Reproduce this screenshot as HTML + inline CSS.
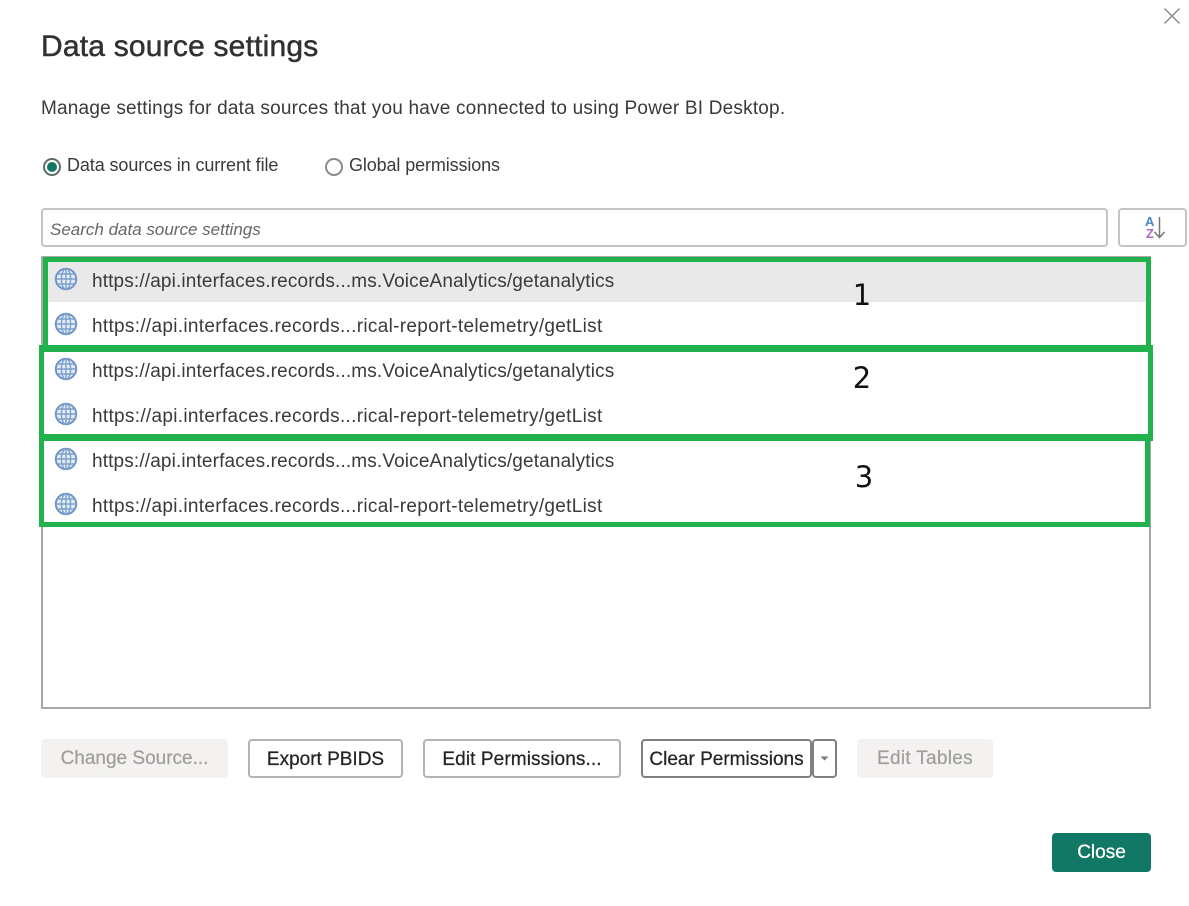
<!DOCTYPE html>
<html>
<head>
<meta charset="utf-8">
<style>
html,body{margin:0;padding:0;background:#fff}
#p{position:relative;width:1189px;height:906px;overflow:hidden;background:#fff;font-family:"Liberation Sans",sans-serif;color:#333}
#p div,#p span.t{position:absolute;box-sizing:border-box;white-space:nowrap}
.u{left:92px;font-size:19px;line-height:24px;color:#3a3a3a}
.a{letter-spacing:.145px}
.c{letter-spacing:.31px}
.b{top:739px;height:39px;font-size:19px;line-height:37px;text-align:center;border-radius:4px;font-weight:400}
.o{border:2px solid #b3b3b3;background:#fff;color:#252423;-webkit-text-stroke:.25px #252423}
.d{background:#f3f2f1;color:#a19f9d;-webkit-text-stroke:.25px #a19f9d;line-height:39px}
.g{background:#22b14c}
.n{font-family:"DejaVu Sans",sans-serif;font-size:29px;line-height:34px;color:#111;width:30px;text-align:center}
svg{position:absolute;display:block}
</style>
</head>
<body>
<div id="p">
  <svg style="left:1163px;top:7px" width="18" height="18" viewBox="0 0 18 18"><path d="M1.5 1.5L16.5 16.5M16.5 1.5L1.5 16.5" stroke="#8a8a8a" stroke-width="1.4" fill="none"/></svg>

  <div style="left:41px;top:29px;font-size:30px;line-height:36px;color:#323130;-webkit-text-stroke:.5px #323130;letter-spacing:.2px">Data source settings</div>
  <div style="left:41px;top:97px;font-size:19px;line-height:24px;color:#3a3a3a;letter-spacing:.2px">Manage settings for data sources that you have connected to using Power BI Desktop.</div>

  <div style="left:43px;top:158px;width:18px;height:18px;border-radius:50%;border:2px solid #5d6d68;background:#fff"></div>
  <div style="left:47px;top:162px;width:10px;height:10px;border-radius:50%;background:#117865"></div>
  <div style="left:67px;top:153px;font-size:18px;line-height:24px;color:#3a3a3a;letter-spacing:-.1px">Data sources in current file</div>
  <div style="left:325px;top:158px;width:18px;height:18px;border-radius:50%;border:2px solid #8a8a8a;background:#fff"></div>
  <div style="left:349px;top:153px;font-size:18px;line-height:24px;color:#3a3a3a;letter-spacing:-.12px">Global permissions</div>

  <div style="left:41px;top:208px;width:1067px;height:39px;border:2px solid #c4c4c4;border-radius:4px"></div>
  <div style="left:50px;top:218px;font-size:17px;line-height:24px;font-style:italic;color:#666">Search data source settings</div>

  <div style="left:1118px;top:208px;width:69px;height:39px;border:2px solid #c4c4c4;border-radius:4px"></div>
  <span class="t" style="left:1145px;top:215px;font-size:13px;line-height:13px;font-weight:700;color:#4a86c8">A</span>
  <span class="t" style="left:1146px;top:227px;font-size:13px;line-height:13px;font-weight:700;color:#a66bc4">Z</span>
  <svg style="left:1153px;top:216px" width="14" height="25" viewBox="0 0 14 25"><path d="M6.5 1V21M1.5 16L6.5 21.5L11.5 16" stroke="#777" stroke-width="1.5" fill="none"/></svg>

  <div style="left:41px;top:256px;width:1110px;height:453px;border:2px solid #a9a9a9;background:#fff"></div>
  <div style="left:48px;top:262px;width:1098px;height:40px;background:#e9e9e9"></div>

  <svg style="left:0;top:0;width:1189px;height:906px" viewBox="0 0 1189 906">
    <g fill="#e4ecf6" stroke="#7da0cc" stroke-width="1.4">
      <g><circle cx="66" cy="279" r="10.2" stroke-width="2" stroke="#6f95c4"/><ellipse cx="66" cy="279" rx="4.6" ry="10.2" fill="none"/><path d="M57 274H75M56 279H76M57 284H75M66 269V289" fill="none"/></g>
      <g><circle cx="66" cy="324" r="10.2" stroke-width="2" stroke="#6f95c4"/><ellipse cx="66" cy="324" rx="4.6" ry="10.2" fill="none"/><path d="M57 319H75M56 324H76M57 329H75M66 314V334" fill="none"/></g>
      <g><circle cx="66" cy="369" r="10.2" stroke-width="2" stroke="#6f95c4"/><ellipse cx="66" cy="369" rx="4.6" ry="10.2" fill="none"/><path d="M57 364H75M56 369H76M57 374H75M66 359V379" fill="none"/></g>
      <g><circle cx="66" cy="414" r="10.2" stroke-width="2" stroke="#6f95c4"/><ellipse cx="66" cy="414" rx="4.6" ry="10.2" fill="none"/><path d="M57 409H75M56 414H76M57 419H75M66 404V424" fill="none"/></g>
      <g><circle cx="66" cy="459" r="10.2" stroke-width="2" stroke="#6f95c4"/><ellipse cx="66" cy="459" rx="4.6" ry="10.2" fill="none"/><path d="M57 454H75M56 459H76M57 464H75M66 449V469" fill="none"/></g>
      <g><circle cx="66" cy="504" r="10.2" stroke-width="2" stroke="#6f95c4"/><ellipse cx="66" cy="504" rx="4.6" ry="10.2" fill="none"/><path d="M57 499H75M56 504H76M57 509H75M66 494V514" fill="none"/></g>
    </g>
  </svg>

  <div class="u a" style="top:270px">https://api.interfaces.records...ms.VoiceAnalytics/getanalytics</div>
  <div class="u c" style="top:315px">https://api.interfaces.records...rical-report-telemetry/getList</div>
  <div class="u a" style="top:360px">https://api.interfaces.records...ms.VoiceAnalytics/getanalytics</div>
  <div class="u c" style="top:405px">https://api.interfaces.records...rical-report-telemetry/getList</div>
  <div class="u a" style="top:450px">https://api.interfaces.records...ms.VoiceAnalytics/getanalytics</div>
  <div class="u c" style="top:495px">https://api.interfaces.records...rical-report-telemetry/getList</div>

  <!-- box 1 -->
  <div class="g" style="left:43px;top:257px;width:1108px;height:5px"></div>
  <div class="g" style="left:43px;top:257px;width:5px;height:90px"></div>
  <div class="g" style="left:1146px;top:257px;width:5px;height:90px"></div>
  <!-- box 2 -->
  <div class="g" style="left:39px;top:345px;width:1114px;height:7px"></div>
  <div class="g" style="left:39px;top:345px;width:5px;height:96px"></div>
  <div class="g" style="left:1148px;top:345px;width:5px;height:94px"></div>
  <!-- box 3 -->
  <div class="g" style="left:39px;top:434px;width:1114px;height:7px"></div>
  <div class="g" style="left:39px;top:434px;width:5px;height:93px"></div>
  <div class="g" style="left:1145px;top:438px;width:5px;height:89px"></div>
  <div class="g" style="left:39px;top:522px;width:1111px;height:5px"></div>

  <div class="n" style="left:847px;top:278px">1</div>
  <div class="n" style="left:847px;top:361px">2</div>
  <div class="n" style="left:849px;top:460px">3</div>

  <div class="b d" style="left:41px;width:187px">Change Source...</div>
  <div class="b o" style="left:248px;width:155px">Export PBIDS</div>
  <div class="b o" style="left:423px;width:198px;letter-spacing:.1px">Edit Permissions...</div>
  <div class="b o" style="left:641px;width:171px;border-color:#808080">Clear Permissions</div>
  <div class="b o" style="left:812px;width:25px;border-color:#808080"></div>
  <svg style="left:820px;top:756px" width="9" height="5" viewBox="0 0 9 5"><path d="M0.5 0.5H8.5L4.5 4.5Z" fill="#777"/></svg>
  <div class="b d" style="left:857px;width:136px;letter-spacing:.3px">Edit Tables</div>

  <div style="left:1052px;top:833px;width:99px;height:39px;border-radius:4px;background:#117865;color:#fff;font-size:19px;line-height:40px;text-align:center;-webkit-text-stroke:.3px #fff">Close</div>
</div>
</body>
</html>
